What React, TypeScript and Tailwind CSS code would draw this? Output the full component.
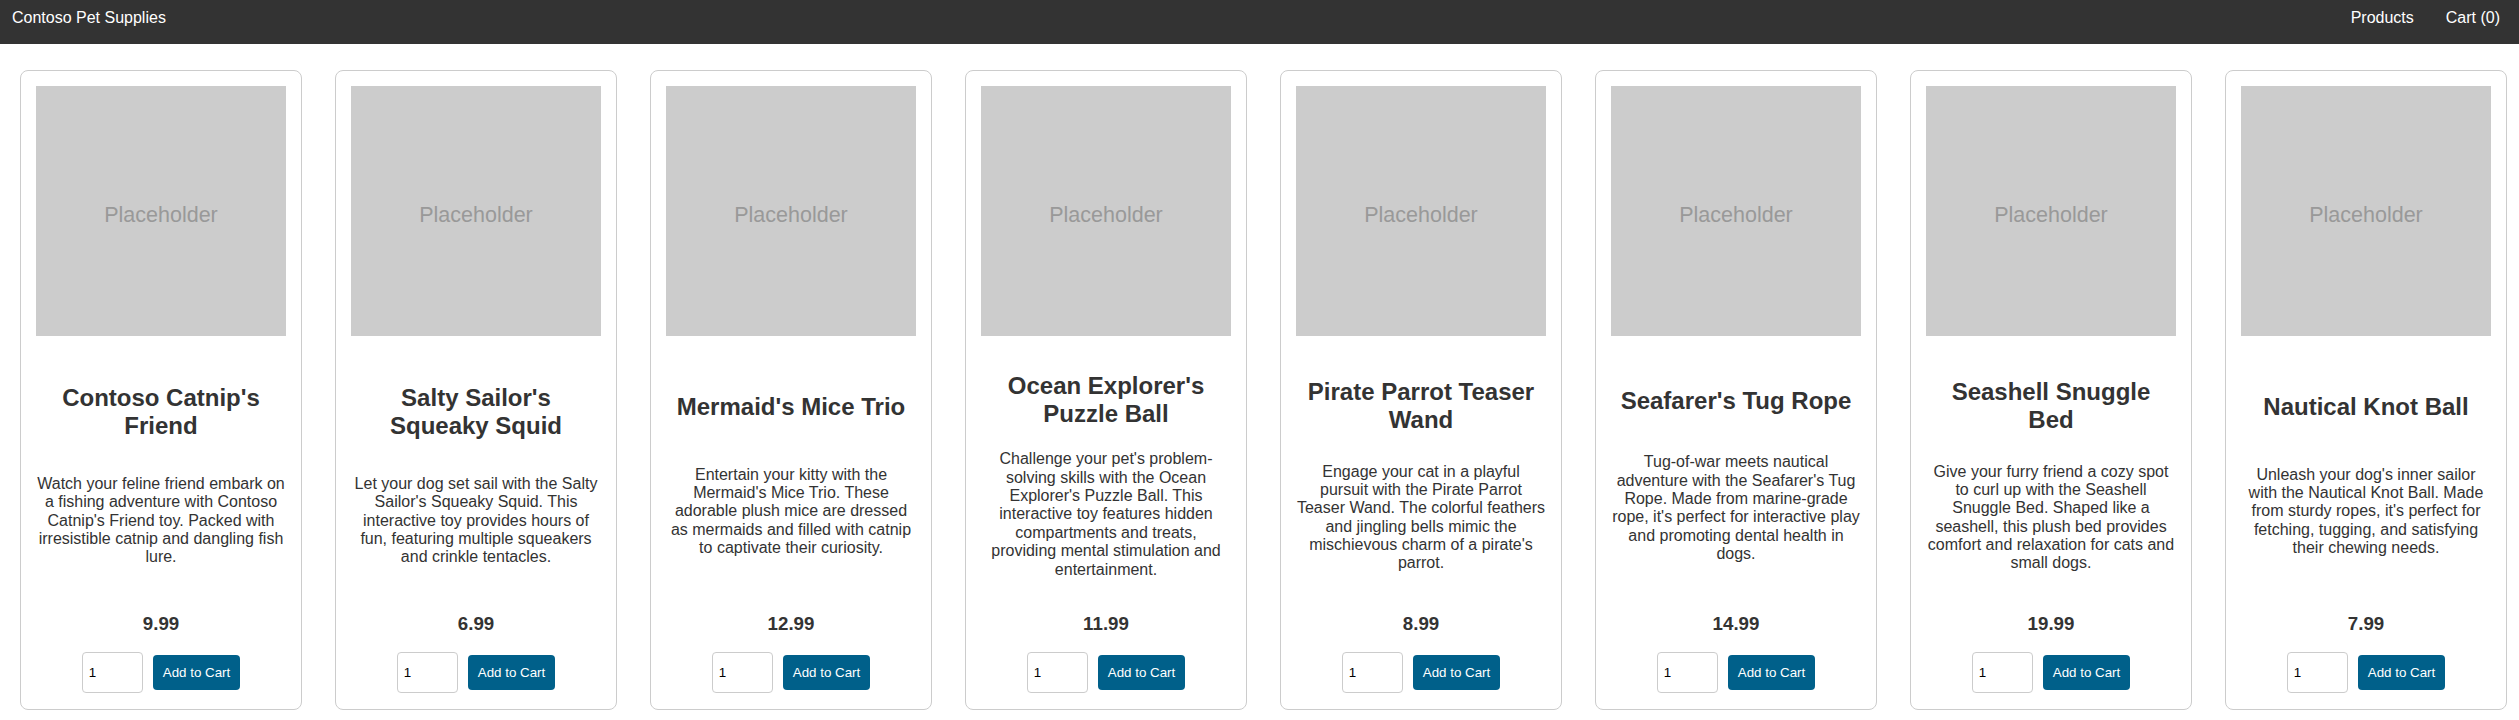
import React from "react";

type Product = { name: string; desc: string; price: string };

const products: Product[] = [
  {
    name: "Contoso Catnip's Friend",
    desc: "Watch your feline friend embark on a fishing adventure with Contoso Catnip's Friend toy. Packed with irresistible catnip and dangling fish lure.",
    price: "9.99",
  },
  {
    name: "Salty Sailor's Squeaky Squid",
    desc: "Let your dog set sail with the Salty Sailor's Squeaky Squid. This interactive toy provides hours of fun, featuring multiple squeakers and crinkle tentacles.",
    price: "6.99",
  },
  {
    name: "Mermaid's Mice Trio",
    desc: "Entertain your kitty with the Mermaid's Mice Trio. These adorable plush mice are dressed as mermaids and filled with catnip to captivate their curiosity.",
    price: "12.99",
  },
  {
    name: "Ocean Explorer's Puzzle Ball",
    desc: "Challenge your pet's problem-solving skills with the Ocean Explorer's Puzzle Ball. This interactive toy features hidden compartments and treats, providing mental stimulation and entertainment.",
    price: "11.99",
  },
  {
    name: "Pirate Parrot Teaser Wand",
    desc: "Engage your cat in a playful pursuit with the Pirate Parrot Teaser Wand. The colorful feathers and jingling bells mimic the mischievous charm of a pirate's parrot.",
    price: "8.99",
  },
  {
    name: "Seafarer's Tug Rope",
    desc: "Tug-of-war meets nautical adventure with the Seafarer's Tug Rope. Made from marine-grade rope, it's perfect for interactive play and promoting dental health in dogs.",
    price: "14.99",
  },
  {
    name: "Seashell Snuggle Bed",
    desc: "Give your furry friend a cozy spot to curl up with the Seashell Snuggle Bed. Shaped like a seashell, this plush bed provides comfort and relaxation for cats and small dogs.",
    price: "19.99",
  },
  {
    name: "Nautical Knot Ball",
    desc: "Unleash your dog's inner sailor with the Nautical Knot Ball. Made from sturdy ropes, it's perfect for fetching, tugging, and satisfying their chewing needs.",
    price: "7.99",
  },
];

function Card({ p }: { p: Product }) {
  return (
    <div className="w-[282px] h-[640px] shrink-0 border border-[#cccccc] rounded-[8px] p-[15px] flex flex-col items-center bg-white">
      <div className="w-[250px] h-[250px] shrink-0 bg-[#cccccc] flex items-center justify-center pt-[8px] text-[#999999] text-[21.5px] leading-[1.15]">
        Placeholder
      </div>
      <div className="mt-[13px] flex-1 w-[249px] flex flex-col justify-evenly text-center text-[#333333]">
        <h2 className="text-[24px] font-bold leading-[1.15]">{p.name}</h2>
        <p className="text-[16px] leading-[1.15]">{p.desc}</p>
      </div>
      <div className="mt-[11px] h-[22px] text-[18.72px] font-bold leading-[22px] text-[#333333]">
        {p.price}
      </div>
      <div className="mt-[17px] mb-[1px] h-[41px] flex items-center gap-[10px]">
        <input
          type="text"
          defaultValue="1"
          className="w-[61px] h-[41px] border border-[#cccccc] rounded-[4px] px-[6px] text-[13.33px] text-black bg-white outline-none"
        />
        <button className="h-[35px] px-[10px] bg-[#00608a] text-white text-[13.33px] rounded-[4px] leading-[1.15]">
          Add to Cart
        </button>
      </div>
    </div>
  );
}

export default function App() {
  return (
    <div className="min-h-[720px] bg-white font-['Liberation_Sans',Arial,sans-serif]">
      <header className="h-[44px] bg-[#333333] text-white text-[16px] leading-[1.15] flex justify-between items-start pt-[9px] pl-[12px] pr-[19px]">
        <div>Contoso Pet Supplies</div>
        <nav className="flex gap-[32px]">
          <span>Products</span>
          <span>Cart (0)</span>
        </nav>
      </header>
      <main className="pt-[26px] pl-[20px] flex gap-[33px]">
        {products.map((p) => (
          <Card key={p.name} p={p} />
        ))}
      </main>
    </div>
  );
}
